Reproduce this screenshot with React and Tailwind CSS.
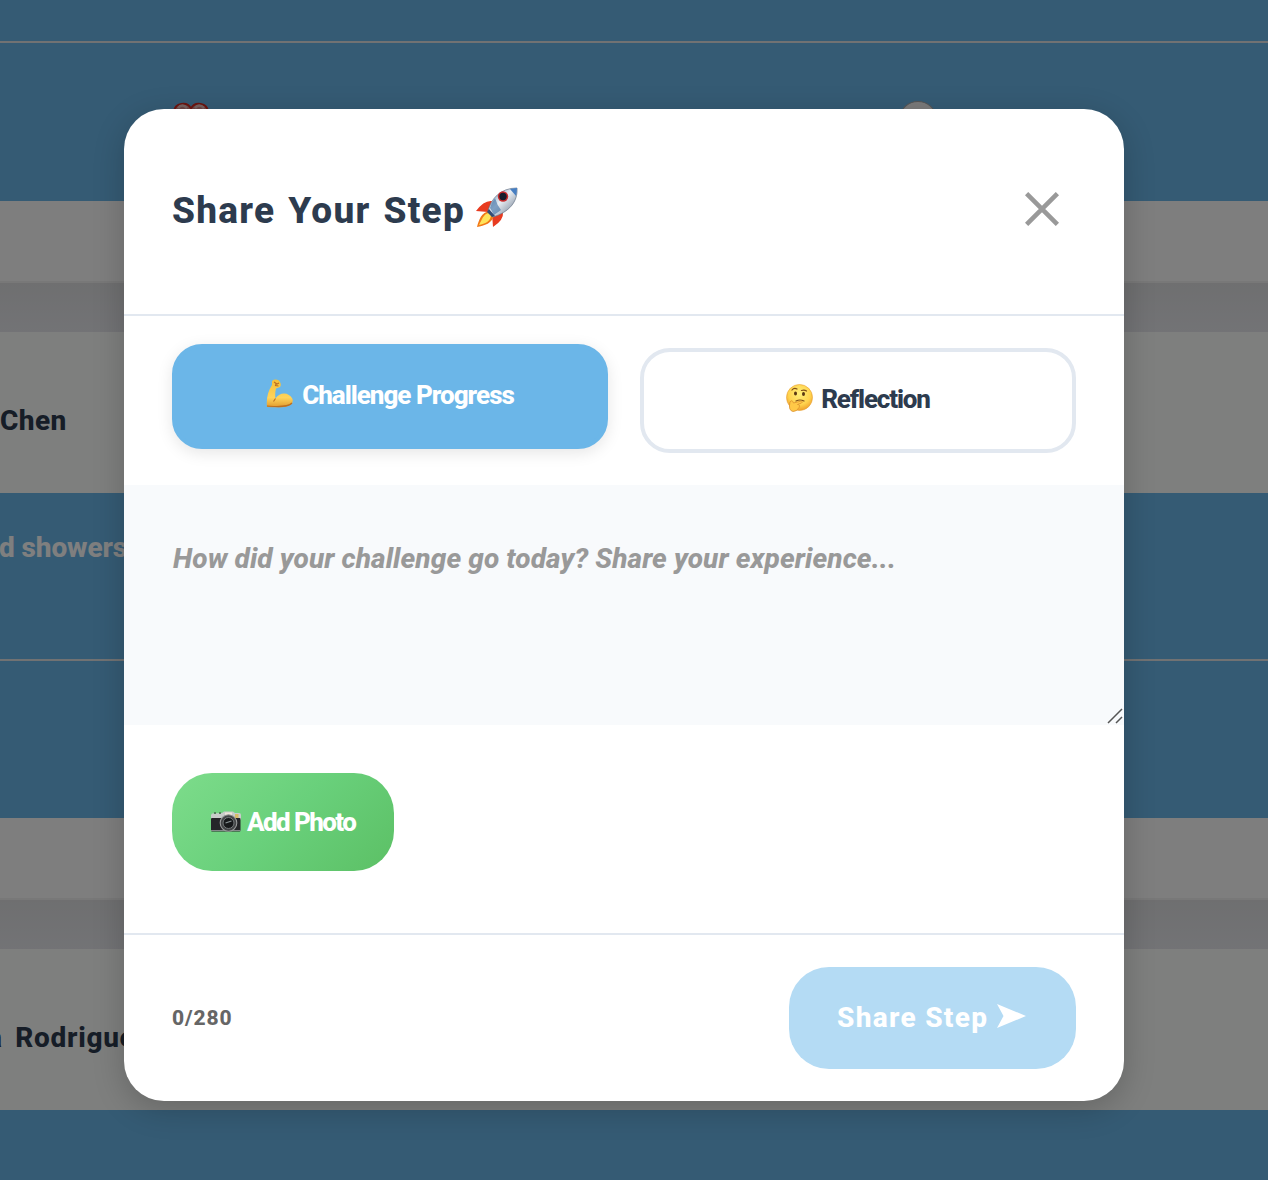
import { useState } from "react";

const tabs = [
  { id: "challenge", label: "Challenge Progress", icon: <MuscleIcon /> },
  { id: "reflection", label: "Reflection", icon: <ThinkingIcon /> },
];

export default function App() {
  const [type, setType] = useState("challenge");
  const [text, setText] = useState("");

  return (
    <div className="relative h-[1180px] w-[1268px] overflow-hidden font-['Roboto','Liberation_Sans',sans-serif] font-extrabold">
      <Feed />

      {/* MODAL */}
      <div className="absolute inset-0 flex items-start bg-black/50 pt-[109px] pl-[124px]">
        <div className="flex h-[992px] w-[1000px] flex-col overflow-hidden rounded-[40px] bg-white shadow-[0_8px_32px_rgba(0,0,0,0.2)]">
          <header className="flex h-[207px] items-center justify-between border-b-2 border-[#e2e8f0] pr-[65px] pb-0.5 pl-12">
            <h2 className="flex items-center text-[37px] leading-none whitespace-nowrap text-[#2d3b4e]">
              <span className="w-[303px] tracking-[1.25px] [word-spacing:2.5px]">Share Your Step</span>
              <RocketIcon />
            </h2>
            <button aria-label="Close" className="mb-[3px]">
              <svg width="34" height="34" viewBox="0 0 34 34" stroke="#999" strokeWidth="4.6">
                <path d="M1.6 1.6 32.4 32.4M32.4 1.6 1.6 32.4" />
              </svg>
            </button>
          </header>

          <div className="grid h-[169px] shrink-0 grid-cols-2 gap-8 px-12 py-8">
            {tabs.map((t) => (
              <button
                key={t.id}
                onClick={() => setType(t.id)}
                className={`flex h-[105px] items-center justify-center rounded-[30px] border-4 pb-[3px] text-[26px] leading-none whitespace-nowrap ${
                  type === t.id
                    ? "-translate-y-1 border-[#6bb6e8] bg-[#6bb6e8] text-white shadow-[0_4px_16px_rgba(0,0,0,0.1)]"
                    : "border-[#e2e8f0] bg-white text-[#2d3b4e]"
                }`}
              >
                {t.icon}
                <span className={t.id === "challenge" ? "tracking-[-1px]" : "tracking-[-1.15px]"}>{t.label}</span>
              </button>
            ))}
          </div>

          <div className="relative h-60 shrink-0 bg-[#f8fafc]">
            <textarea
              value={text}
              maxLength={280}
              onChange={(e) => setText(e.target.value)}
              placeholder="How did your challenge go today? Share your experience..."
              className="block h-full w-full resize-none px-[49px] pt-[54px] text-[28px] leading-[40px] tracking-[0.1px] outline-none placeholder:text-[#999] placeholder:italic"
            />
            <svg className="absolute right-px bottom-px" width="16" height="16" viewBox="0 0 16 16" stroke="#555" strokeWidth="1.5">
              <path d="M1 15 15 1M9 15l6-6" />
            </svg>
          </div>

          <div className="h-[208px] shrink-0 px-12 pt-12">
            <button className="flex h-[98px] w-[222px] items-center rounded-[40px] bg-linear-135 from-[#7ddc8b] via-[#69d07b] to-[#5cc065] pb-px pl-[38px] text-[26px] leading-none whitespace-nowrap text-white">
              <CameraIcon />
              <span className="tracking-[-1.6px]">Add Photo</span>
            </button>
          </div>

          <footer className="flex h-[168px] shrink-0 items-center justify-between border-t-2 border-[#e2e8f0] px-12">
            <span className="text-[21px] leading-none tracking-[0.9px] text-[#666]">{text.length}/280</span>
            <button className="flex h-[102px] w-[287px] items-center rounded-[40px] bg-[#b4dbf4] pl-12 text-left text-[28px] leading-none whitespace-nowrap text-white">
              <span className="w-[160px] tracking-[1.3px]">Share Step</span>
              <svg className="mb-1" width="30" height="24" viewBox="0 0 30 24" fill="#fff">
                <path d="M0 0 29 12 0 24 6.5 12z" />
              </svg>
            </button>
          </footer>
        </div>
      </div>
    </div>
  );
}

/* --- FEED BEHIND THE MODAL --- */

function Feed() {
  return (
    <div className="flex h-full flex-col bg-[#e5e6ea]">
      <div className="h-[43px] shrink-0 border-b-2 border-[#e2e4e6] bg-[#6bb6e8]" />
      <div className="flex h-[158px] shrink-0 items-start bg-[#6bb6e8] pt-[58px] pl-[172px]">
        <HeartIcon />
        <div className="ml-[690px] h-8 w-9 rounded-[50%] border border-[#aaa] bg-[#f6f6f6]" />
      </div>
      <CardEnd />
      <Gap />
      <CardHeader name="Chen" />
      <div className="h-[168px] shrink-0 border-b-2 border-[#e2e4e6] bg-[#6bb6e8] pt-[40px] text-[28px] leading-[30px] whitespace-nowrap text-white">
        <span className="-ml-[1px] tracking-[-0.1px]">d showers</span>
      </div>
      <div className="h-[157px] shrink-0 bg-[#6bb6e8]" />
      <CardEnd />
      <Gap />
      <CardHeader name="a Rodriguez" shifted />
      <div className="h-[70px] shrink-0 bg-[#6bb6e8]" />
    </div>
  );
}

function CardEnd() {
  return <div className="h-[82px] shrink-0 border-b-2 border-[#f0f0f0] bg-[#fdfdfd]" />;
}

function Gap() {
  return <div className="h-[49px] shrink-0 bg-linear-to-b from-[#dedfe1] to-[#e6e7ec]" />;
}

function CardHeader({ name, shifted }) {
  return (
    <div className="flex h-[161px] shrink-0 items-center bg-[#fdfefd] pt-[17px] text-[28px] leading-none whitespace-nowrap text-[#2d3b4e]">
      <span className={shifted ? "-ml-[13px] tracking-[0.7px] [word-spacing:5px]" : "tracking-[0.4px]"}>{name}</span>
    </div>
  );
}

/* --- ICONS --- */

function HeartIcon() {
  return (
    <svg width="38" height="34" viewBox="0 0 38 34">
      <path d="M19 33C10 26 2 19 2 10.500A9 8.500 0 0 1 19 7.500a9 8.500 0 0 1 17 3C36 19 28 26 19 33z" fill="#d98a88" stroke="#d92a20" strokeWidth="2" />
      <path d="M6 7q4-5 9 0M23 7q4-5 9 0" fill="none" stroke="#f0c5c3" strokeWidth="2.500" />
    </svg>
  );
}

function RocketIcon() {
  return (
    <svg className="mb-1.5" width="44" height="42" viewBox="0 0 44 42">
      <defs>
        <linearGradient id="hull" x1="0" y1="0" x2="1" y2="1">
          <stop offset="0" stopColor="#517eaa" />
          <stop offset="0.45" stopColor="#e8edf2" />
          <stop offset="0.7" stopColor="#aab4c1" />
          <stop offset="1" stopColor="#245caa" />
        </linearGradient>
      </defs>
      <path d="M17 14Q9 13 1 24l12 1zM28 25q1 8-10 15l-1-13z" fill="#e83b20" />
      <path d="M15 24C6 25 4 33 2 40c7-1 16-4 17-12z" fill="#f27a19" />
      <path d="M14 26C8 27 7 33 4 38c6-1 12-4 12-10z" fill="#ffe45b" />
      <path d="M13 24C16 12 25 1 42 1c1 14-8 24-24 29z" fill="url(#hull)" stroke="#687587" strokeWidth=".7" />
      <path d="M35 2q5-1 7-1 0 4-1 8z" fill="#477fc2" />
      <path d="M15 21q1-5 5-10 2 7 6 12l-7 5z" fill="#396ca4" fillOpacity=".6" />
      <path d="m14 22 6 7-3 1-5-5z" fill="#334d76" />
      <circle cx="28" cy="9.500" r="5.200" fill="#c92a2b" />
      <circle cx="28" cy="9.500" r="3.700" fill="#171d2b" />
    </svg>
  );
}

function MuscleIcon() {
  return (
    <svg className="mr-2 mb-1" width="28" height="29" viewBox="0 0 28 29">
      <defs>
        <linearGradient id="skin" x1="0" y1="0" x2="0" y2="1">
          <stop offset="0" stopColor="#f4be38" />
          <stop offset="0.65" stopColor="#ffd45b" />
          <stop offset="1" stopColor="#e19a2d" />
        </linearGradient>
      </defs>
      <path d="M6 2Q9-.5 13 1.500q3 4 1 6.500l-4 1.500c-1 4-1 7-.5 10C14 12.500 23 13 26.500 20c1 4-1 6-6 7.500-7 1.500-13 .500-19.500.500C0 20 2 12 6 6z" fill="url(#skin)" />
      <path d="M1 27c8 .500 20 2 25-3M8 3l3 2 2-1M10 5l-.5 1.500 3 .5M9.500 19.500l-2 3" fill="none" stroke="#ba6e22" strokeWidth="1.100" />
    </svg>
  );
}

function ThinkingIcon() {
  return (
    <svg className="mr-2 mb-[3px]" width="27" height="28" viewBox="0 0 27 28">
      <defs>
        <radialGradient id="face" cx=".5" cy=".35" r=".65">
          <stop offset="0" stopColor="#fff07a" />
          <stop offset="0.65" stopColor="#ffd34e" />
          <stop offset="1" stopColor="#efa02b" />
        </radialGradient>
      </defs>
      <circle cx="13.500" cy="13.500" r="13" fill="url(#face)" stroke="#e7a034" strokeWidth=".6" />
      <ellipse cx="9.500" cy="9.500" rx="1.500" ry="2" fill="#5b3813" />
      <ellipse cx="17.500" cy="10" rx="1.500" ry="2" fill="#5b3813" />
      <path d="M6 6q2-2.500 5-1M15.500 6.500q3-1 5 .5M10 17q4-2 8 0" fill="none" stroke="#825018" strokeWidth="1.200" strokeLinecap="round" />
      <path d="M4 18q2-3 3.500 1l8-2q2 1 0 2l-4 1.500q3 0 1.500 3-2 4-6 4-5-1-3-9.500z" fill="#ffc947" stroke="#dc902f" strokeWidth=".8" />
    </svg>
  );
}

function CameraIcon() {
  return (
    <svg className="mr-1.5" width="31" height="22" viewBox="0 0 31 22">
      <path d="M2 2.500 12 2l2-1.500h9L25 2h4q2 0 2 2v5H1V4z" fill="#c8ccca" />
      <rect x="1" y="7" width="29.500" height="13.500" rx="1" fill="#252629" />
      <path d="M1 19.500h29.500" stroke="#85898a" strokeWidth="1" />
      <path d="M4 1h2v2H4zM9 1h2v2H9z" fill="#54825c" />
      <path d="M15 1.500h7v2.500h-7z" fill="#eee4da" />
      <path d="M25 3h3.500v4H25z" fill="#d8bb65" />
      <circle cx="18.500" cy="12" r="8.300" fill="#434547" stroke="#999b9b" strokeWidth="1.100" />
      <circle cx="18.500" cy="12" r="5.500" fill="#17191b" stroke="#74797a" />
      <path d="m15.500 12 6-2" stroke="#8a9496" strokeWidth="1.300" />
    </svg>
  );
}
